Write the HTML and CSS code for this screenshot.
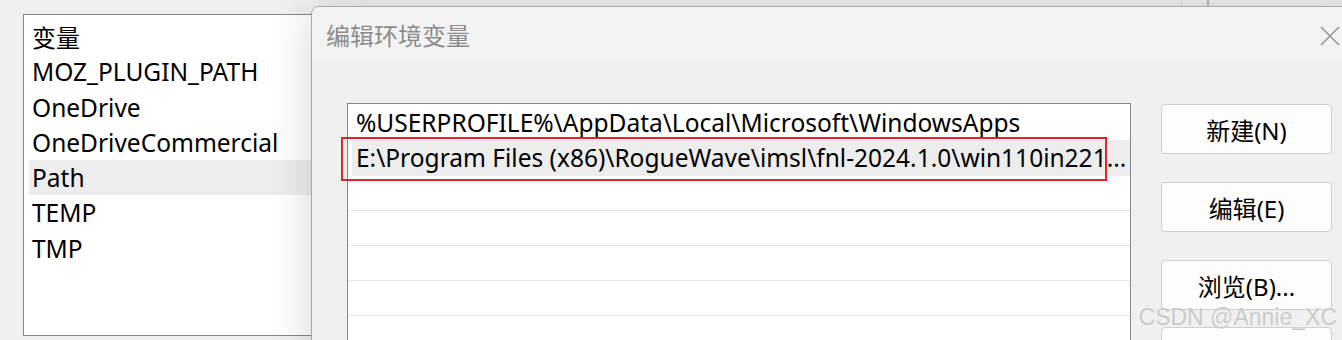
FILE: index.html
```html
<!DOCTYPE html>
<html lang="zh-CN">

<head>
    <meta charset="UTF-8">
    <meta name="viewport" content="width=device-width, initial-scale=1.0">
    <title>编辑环境变量</title>
    <link rel="stylesheet" href="styles.css">
</head>

<body>
    <div class="top-strip">
        <span class="strip-cell"></span>
        <span class="strip-cell dark"></span>
    </div>

    <!-- 背后的"环境变量"窗口里的变量列表 -->
    <ul class="var-list">
        <li><span class="cjk">变量</span></li>
        <li>MOZ_PLUGIN_PATH</li>
        <li>OneDrive</li>
        <li>OneDriveCommercial</li>
        <li class="selected">Path</li>
        <li>TEMP</li>
        <li>TMP</li>
    </ul>

    <div class="dialog">
        <div class="titlebar">
            <span class="title cjk">编辑环境变量</span>
            <svg class="close" width="20" height="20" viewBox="0 0 20 20">
                <path d="M1 1 L19 19 M19 1 L1 19" stroke="#8f8f8f" stroke-width="1.4" fill="none" />
            </svg>
        </div>
        <div class="dialog-body">
            <div class="path-list">
                <div class="row">%USERPROFILE%\AppData\Local\Microsoft\WindowsApps</div>
                <div class="row selected">E:\Program Files (x86)\RogueWave\imsl\fnl-2024.1.0\win110in221...</div>
                <div class="row empty"></div>
                <div class="row empty"></div>
                <div class="row empty"></div>
                <div class="row empty"></div>
                <div class="highlight-box"></div>
            </div>
            <div class="buttons">
                <button><span class="cjk">新建</span>(N)</button>
                <button><span class="cjk">编辑</span>(E)</button>
                <button><span class="cjk">浏览</span>(B)...</button>
                <button class="partial"></button>
            </div>
        </div>
    </div>

    <div class="watermark">CSDN @Annie_XC</div>
</body>

</html>
```

FILE: styles.css
```css
body {
    margin: 0;
    padding: 0;
    width: 1342px;
    height: 340px;
    overflow: hidden;
    position: relative;
    background-color: #f0f0f0;
    font-family: "Noto Sans", "Noto Sans CJK SC", sans-serif;
    font-size: 24.5px;
    color: #000;
}

.cjk {
    font-family: "Noto Sans CJK SC", sans-serif;
    font-size: 24px;
}

.top-strip {
    position: absolute;
    top: 0;
    left: 1181px;
    height: 7px;
    display: flex;
}

.strip-cell {
    width: 25px;
    border-left: 1px solid #dcdcdc;
}

.strip-cell.dark {
    border-left: 2px solid #b8b8b8;
}

.var-list {
    list-style: none;
    margin: 14px 0 0 23px;
    padding: 4px 0 0 5px;
    width: 420px;
    height: 316px;
    border: 1px solid #828790;
    background-color: #fff;
}

.var-list li {
    height: 35.3px;
    line-height: 35.3px;
    padding-left: 3px;
    white-space: nowrap;
}

.var-list li.selected {
    background-color: #ededed;
}

.dialog {
    position: absolute;
    left: 311px;
    top: 6px;
    width: 1060px;
    height: 400px;
    border: 1px solid #a9a9a9;
    border-radius: 8px;
    background-color: #f0f0f0;
    box-shadow: 0 0 45px rgba(0, 0, 0, 0.16);
    overflow: hidden;
}

.titlebar {
    height: 56px;
    background-color: #f3f3f3;
    display: flex;
    align-items: center;
    justify-content: space-between;
    padding: 0 32px 0 14px;
}

.title {
    color: #8c8c8c;
    margin-top: -2px;
}

.close {
    margin-top: 2px;
}

.dialog-body {
    display: flex;
    align-items: flex-start;
    padding: 40px 0 0 35px;
}

.path-list {
    position: relative;
    width: 782px;
    height: 300px;
    border: 1px solid #828790;
    background-color: #fff;
    padding-top: 2px;
}

.path-list .row {
    height: 35px;
    line-height: 35px;
    padding-left: 8px;
    white-space: nowrap;
}

.path-list .row:first-child {
    height: 34px;
    line-height: 34px;
}

.path-list .row.selected {
    height: 36px;
    line-height: 36px;
    margin-left: 4px;
    padding-left: 4px;
    background-color: #ededed;
}

.path-list .row.empty {
    box-sizing: border-box;
    border-bottom: 1px solid #e6e6e6;
}

.highlight-box {
    position: absolute;
    left: -7px;
    top: 33px;
    width: 762px;
    height: 40px;
    border: 2px solid #e3222c;
}

.buttons {
    display: flex;
    flex-direction: column;
    gap: 28px;
    margin: 1px 0 0 30px;
}

.buttons button {
    width: 171px;
    height: 50px;
    border: 1px solid #d0d0d0;
    border-radius: 4px;
    background-color: #fdfdfd;
    font-family: "Noto Sans", "Noto Sans CJK SC", sans-serif;
    font-size: 24px;
    color: #000;
    padding: 0;
}

.buttons button.partial {
    margin-top: -11px;
}

.watermark {
    position: absolute;
    right: 5px;
    top: 304px;
    font-family: "Liberation Sans", Arial, sans-serif;
    font-size: 23px;
    color: rgba(185, 185, 185, 0.75);
    text-shadow: 0 0 1px rgba(255, 255, 255, 0.8);
}
```
